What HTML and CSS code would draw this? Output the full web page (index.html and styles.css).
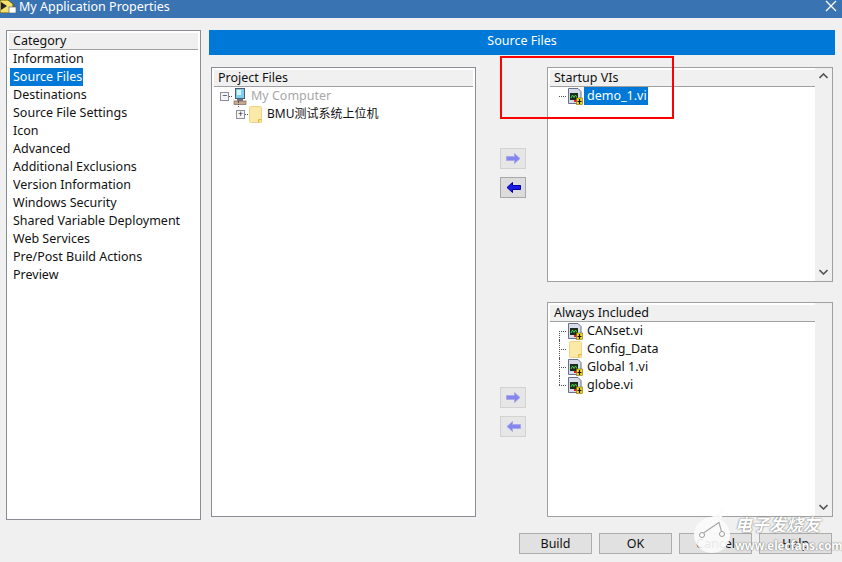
FILE: index.html
```html
<!DOCTYPE html>
<html lang="en">
<head>
    <meta charset="UTF-8">
    <meta name="viewport" content="width=device-width, initial-scale=1.0">
    <title>My Application Properties</title>
    <link rel="stylesheet" href="styles.css">
</head>
<body>
<svg class="defs" width="0" height="0">
    <symbol id="vi" viewBox="0 0 16 17">
        <path d="M1.500 .5H11L14 3.500V15.500H1.500Z" fill="#d8dce8" stroke="#68708c"/>
        <rect x="3" y="5" width="8" height="7" fill="#1c2c1c"/>
        <path d="M4 10L5.500 7L7 9.500L8.500 7L10 9.500" fill="none" stroke="#4cd04c"/>
        <rect x="9.500" y="10" width="6" height="6.500" fill="#f4d820" stroke="#806800" stroke-width=".6"/>
        <path d="M12.500 11V16M10.500 13.500H14.500" stroke="#111" stroke-width="1.200"/>
        <rect x="7" y="12" width="2.500" height="2" fill="#e02020"/>
    </symbol>
    <symbol id="folder" viewBox="0 0 13 17">
        <path d="M.5 1.500Q.5 .5 1.500 .5H11.500Q12.500 .5 12.500 1.500V16.500H1.500Q.5 16.500 .5 15.500Z" fill="#fbe9a8" stroke="#ecd588"/>
        <path d="M9.500 16.500V13.500H12.500" fill="#f6d46a" stroke="#e2b93e"/>
    </symbol>
    <symbol id="computer" viewBox="0 0 14 17">
        <rect x="2.500" y=".5" width="9" height="10" fill="#7ed0f0" stroke="#50586c"/>
        <rect x="4" y="2" width="4" height="5" fill="#d8f4fc"/>
        <rect x="4" y="11" width="6" height="2" fill="#70788c"/>
        <rect x="1" y="13" width="12" height="3.500" fill="#c8a890" stroke="#685848" stroke-width=".6"/>
    </symbol>
    <symbol id="arrow-right" viewBox="0 0 15 11">
        <path d="M.5 3.500H8.500V.5L14 5.500L8.500 10.500V7.500H.5Z" fill="currentColor" stroke="#a8a8e8"/>
    </symbol>
    <symbol id="arrow-left" viewBox="0 0 15 11">
        <path d="M14.500 3.500H6.500V.5L1 5.500L6.500 10.500V7.500H14.500Z" fill="currentColor" stroke="#a8a8e8"/>
    </symbol>
    <symbol id="arrow-left-on" viewBox="0 0 15 11">
        <path d="M14.500 3.500H6.500V.5L1 5.500L6.500 10.500V7.500H14.500Z" fill="#1a1ae6" stroke="#0000a0"/>
    </symbol>
</svg>

<div class="titlebar">
    <svg class="app-icon" width="16" height="13" viewBox="0 0 16 13">
        <path d="M0 0H8L13 4V13H0Z" fill="#f2e070" stroke="#6a5a10"/>
        <path d="M1 2L7 6L1 10Z" fill="#222"/>
        <rect x="9" y="7" width="7" height="6" fill="#fff" stroke="#555" stroke-width=".6"/>
    </svg>
    <span class="titlebar-text">My Application Properties</span>
    <svg class="close-icon" width="12" height="12" viewBox="0 0 12 12">
        <path d="M1 1L11 11M11 1L1 11" stroke="#fff" stroke-width="1.300"/>
    </svg>
</div>

<div class="main">
    <div class="sidebar">
        <div class="panel-header">Category</div>
        <ul class="category-list">
            <li>Information</li>
            <li><span class="selected">Source Files</span></li>
            <li>Destinations</li>
            <li>Source File Settings</li>
            <li>Icon</li>
            <li>Advanced</li>
            <li>Additional Exclusions</li>
            <li>Version Information</li>
            <li>Windows Security</li>
            <li>Shared Variable Deployment</li>
            <li>Web Services</li>
            <li>Pre/Post Build Actions</li>
            <li>Preview</li>
        </ul>
    </div>

    <div class="content">
        <div class="page-title">Source Files</div>
        <div class="panels">
            <div class="panel project-panel">
                <div class="panel-header">Project Files</div>
                <div class="tree-row root-row">
                    <span class="expander">−</span>
                    <span class="dots short"></span>
                    <svg class="icon computer" width="14" height="17"><use href="#computer"/></svg>
                    <span class="muted">My Computer</span>
                    <span class="stem"></span>
                </div>
                <div class="tree-row child-row">
                    <span class="expander">+</span>
                    <span class="dots short"></span>
                    <svg class="icon" width="13" height="17"><use href="#folder"/></svg>
                    <span class="cjk-label">BMU测试系统上位机</span>
                </div>
            </div>

            <div class="arrows">
                <button class="arrow-button" type="button"><svg width="15" height="11"><use href="#arrow-right"/></svg></button>
                <button class="arrow-button active" type="button"><svg width="15" height="11"><use href="#arrow-left-on"/></svg></button>
                <button class="arrow-button lower" type="button"><svg width="15" height="11"><use href="#arrow-right"/></svg></button>
                <button class="arrow-button" type="button"><svg width="15" height="11"><use href="#arrow-left"/></svg></button>
            </div>

            <div class="file-panels">
                <div class="panel file-panel">
                    <div class="file-list">
                        <div class="panel-header">Startup VIs</div>
                        <div class="tree-row leaf-row">
                            <span class="dots"></span>
                            <svg class="icon" width="16" height="17"><use href="#vi"/></svg>
                            <span class="selected">demo_1.vi</span>
                        </div>
                    </div>
                    <div class="scrollbar">
                        <svg width="9" height="6" viewBox="0 0 9 6"><path d="M.5 5L4.500 1L8.500 5" fill="none" stroke="#555" stroke-width="1.600"/></svg>
                        <svg width="9" height="6" viewBox="0 0 9 6"><path d="M.5 1L4.500 5L8.500 1" fill="none" stroke="#555" stroke-width="1.600"/></svg>
                    </div>
                </div>

                <div class="panel file-panel">
                    <div class="file-list">
                        <div class="panel-header">Always Included</div>
                        <div class="tree-row leaf-row branch first">
                            <span class="dots"></span>
                            <svg class="icon" width="16" height="17"><use href="#vi"/></svg>
                            <span>CANset.vi</span>
                        </div>
                        <div class="tree-row leaf-row branch">
                            <span class="dots"></span>
                            <svg class="icon folder-leaf" width="13" height="17"><use href="#folder"/></svg>
                            <span>Config_Data</span>
                        </div>
                        <div class="tree-row leaf-row branch">
                            <span class="dots"></span>
                            <svg class="icon" width="16" height="17"><use href="#vi"/></svg>
                            <span>Global 1.vi</span>
                        </div>
                        <div class="tree-row leaf-row branch last">
                            <span class="dots"></span>
                            <svg class="icon" width="16" height="17"><use href="#vi"/></svg>
                            <span>globe.vi</span>
                        </div>
                    </div>
                    <div class="scrollbar">
                        <span></span>
                        <svg width="9" height="6" viewBox="0 0 9 6"><path d="M.5 1L4.500 5L8.500 1" fill="none" stroke="#555" stroke-width="1.600"/></svg>
                    </div>
                </div>
            </div>
        </div>
    </div>
</div>

<div class="footer">
    <button class="button" type="button">Build</button>
    <button class="button" type="button">OK</button>
    <button class="button" type="button">Cancel</button>
    <button class="button" type="button">Help</button>
</div>

<!-- annotation and watermark sit on top of the dialog -->
<div class="red-box"></div>
<div class="watermark">
    <svg class="watermark-logo" width="38" height="50" viewBox="0 0 38 50">
        <path d="M28 2C30 7 29 10 26 12A18 18 0 1 1 10 12C16 9 24 10 28 2Z" fill="#fbfbfb" fill-opacity=".92"/>
        <path d="M9.500 26L25 15.500L27.500 24.500" fill="none" stroke="#a8a8a8" stroke-width="1.100"/>
        <circle cx="8" cy="28" r="2.500" fill="#fff" stroke="#999"/>
        <circle cx="28" cy="27" r="2.500" fill="#fff" stroke="#999"/>
    </svg>
    <div class="watermark-text">
        <div class="watermark-cn">电子发烧友</div>
        <div class="watermark-url">www.elecfans.com</div>
    </div>
</div>
</body>
</html>
```

FILE: styles.css
```css
:root {
    --window-color: #f0f0f0;
    --title-color: #3a73b1;
    --select-color: #0078d7;
    --border-color: #8a8d94;
    --text-color: #111;
}

* {
    box-sizing: border-box;
}

body {
    font-family: "Noto Sans", "Noto Sans CJK SC", sans-serif;
    font-size: 12.500px;
    background-color: var(--window-color);
    color: var(--text-color);
    margin: 0;
    width: 842px;
    height: 562px;
    overflow: hidden;
    position: relative;
}

.defs {
    position: absolute;
}

.titlebar {
    display: flex;
    height: 18px;
    background-color: var(--title-color);
    color: #fff;
    overflow: hidden;
}

.app-icon {
    flex: none;
    margin-right: 3px;
}

.titlebar-text {
    flex: 1;
    font-size: 12.500px;
    line-height: 13px;
}

.close-icon {
    margin: 0 5px 0 0;
}

.main {
    display: flex;
    padding: 12px 0 0 6px;
}

.sidebar {
    width: 195px;
    height: 490px;
    background: #fff;
    border: 1px solid var(--border-color);
    padding: 2px;
}

.panel-header {
    height: 17px;
    line-height: 16px;
    padding-left: 4px;
    background-color: var(--window-color);
    border-bottom: 1px solid #a0a0a0;
}

.category-list {
    list-style: none;
    margin: 0;
    padding: 0;
}

.category-list li {
    height: 18px;
    line-height: 18px;
    padding-left: 4px;
}

.category-list .selected {
    display: inline-block;
    margin-left: -3px;
    padding: 0 1px 0 3px;
}

.selected {
    background-color: var(--select-color);
    color: #fff;
    height: 18px;
    line-height: 18px;
    padding: 0 1px 0 3px;
}

.content {
    margin-left: 8px;
    width: 626px;
}

.page-title {
    height: 25px;
    line-height: 22px;
    background-color: var(--select-color);
    color: #fff;
    text-align: center;
}

.panels {
    display: flex;
    margin: 12px 0 0 2px;
}

.panel {
    background: #fff;
    border: 1px solid var(--border-color);
    padding: 2px;
}

.project-panel {
    width: 265px;
    height: 450px;
}

.tree-row {
    display: flex;
    align-items: center;
    height: 18px;
    line-height: 18px;
    position: relative;
    white-space: nowrap;
}

.root-row {
    padding-left: 6px;
}

.child-row {
    padding-left: 22px;
}

.expander {
    flex: none;
    width: 9px;
    height: 9px;
    border: 1px solid #8f8f9c;
    background: #f4f4f8;
    color: #223;
    font-size: 9px;
    line-height: 6px;
    text-align: center;
}

.dots {
    flex: none;
    width: 7px;
    margin-right: 1px;
    border-top: 1px dotted #555;
}

.dots.short {
    width: 3px;
}

.icon {
    flex: none;
}

.muted {
    color: #a8a8a8;
    margin-left: 4px;
}

.stem {
    position: absolute;
    left: 24px;
    top: 14px;
    height: 6px;
    border-left: 1px dotted #555;
}

.cjk-label {
    margin-left: 5px;
    font-size: 12px;
}

.arrows {
    display: flex;
    flex-direction: column;
    width: 71px;
    padding: 81px 0 0 24px;
}

.arrow-button {
    display: flex;
    align-items: center;
    justify-content: center;
    width: 26px;
    height: 21px;
    margin-bottom: 8px;
    padding: 0;
    background: #e6e6e6;
    border: 1px solid #d2d2d2;
    color: #8585ee;
}

.arrow-button.active {
    background: #dcdcdc;
    border-color: #a8a8a8;
}

.arrow-button.lower {
    margin-top: 181px;
}

.file-panels {
    display: flex;
    flex-direction: column;
    gap: 20px;
    width: 286px;
}

.file-panel {
    display: flex;
    height: 215px;
    border-color: #a0a0a0;
}

.file-list {
    flex: 1;
}

.file-panel .tree-row {
    padding-left: 9px;
}

.file-panel .tree-row > :last-child {
    margin-left: 4px;
}

.file-panel .tree-row .selected {
    margin-left: 1px;
}

.file-panel .folder-leaf {
    margin: 0 1px 0 2px;
}

.branch::before {
    content: "";
    position: absolute;
    left: 9px;
    top: 0;
    height: 18px;
    border-left: 1px dotted #555;
}

.branch.first::before {
    top: 9px;
    height: 9px;
}

.branch.last::before {
    height: 9px;
}

.scrollbar {
    display: flex;
    flex-direction: column;
    justify-content: space-between;
    align-items: center;
    flex: none;
    width: 17px;
    margin: -2px -2px -2px 0;
    padding: 5px 0 6px;
    background-color: var(--window-color);
}

.footer {
    display: flex;
    justify-content: flex-end;
    gap: 7px;
    margin-top: 13px;
    padding-right: 10px;
}

.button {
    width: 73px;
    height: 21px;
    padding: 0 0 1px;
    background-color: #e1e1e1;
    border: 1px solid #adadad;
    color: var(--text-color);
    font: inherit;
}

.red-box {
    position: absolute;
    left: 500px;
    top: 56px;
    width: 174px;
    height: 63px;
    border: 2px solid #ff0000;
}

.watermark {
    position: absolute;
    left: 694px;
    top: 507px;
    display: flex;
    color: #fff;
}

.watermark-text {
    margin-left: 3px;
    font-weight: 700;
    text-shadow: 0 0 1px #777, 0 0 2px #888;
}

.watermark-cn {
    margin-top: 7px;
    font-size: 17px;
    font-style: italic;
    line-height: 22px;
}

.watermark-url {
    font-size: 11.500px;
    line-height: 16px;
    margin-top: 2px;
}
```
